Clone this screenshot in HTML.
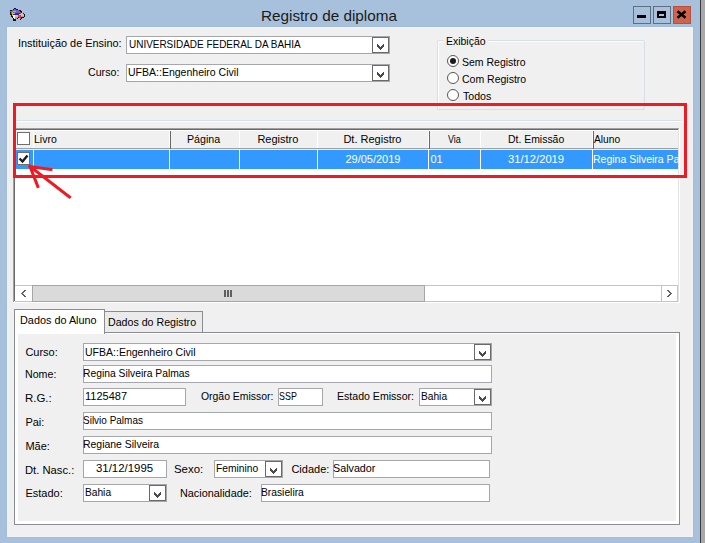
<!DOCTYPE html>
<html><head><meta charset="utf-8"><style>
html,body{margin:0;padding:0;}
body{width:705px;height:543px;position:relative;overflow:hidden;background:#a7c1dc;font-family:"Liberation Sans", sans-serif;}
.t{position:absolute;white-space:pre;line-height:20px;transform-origin:0 0;font-family:"Liberation Sans", sans-serif;}
.box{position:absolute;border:1px solid #a5a7ad;background:#fff;}
.btn{position:absolute;border:1px solid #696969;background:#fff;}
.chev{position:absolute;}
</style></head><body>
<div style="position:absolute;left:7px;top:27px;width:686px;height:510px;background:#f0f0f0;"></div>
<div style="position:absolute;left:6px;top:26px;width:688px;height:1px;background:#a2bddb;"></div>
<div style="position:absolute;left:6px;top:537px;width:688px;height:1px;background:#a2bddb;"></div>
<div style="position:absolute;left:6px;top:26px;width:1px;height:512px;background:#a2bddb;"></div>
<div style="position:absolute;left:693px;top:26px;width:1px;height:512px;background:#a2bddb;"></div>
<div style="position:absolute;left:7px;top:27px;width:686px;height:1px;background:#f4f3f1;"></div>
<div style="position:absolute;left:7px;top:536px;width:686px;height:1px;background:#f4f3f1;"></div>
<div style="position:absolute;left:7px;top:27px;width:1px;height:510px;background:#f4f3f1;"></div>
<div style="position:absolute;left:692px;top:27px;width:1px;height:510px;background:#f4f3f1;"></div>
<div style="position:absolute;left:700px;top:0px;width:1px;height:543px;background:#3c3c3c;"></div>
<div style="position:absolute;left:701px;top:0px;width:4px;height:543px;background:#a9a9a9;"></div>
<div style="position:absolute;left:633px;top:6px;width:16px;height:16px;border:1px solid #5f6f80;background:#a7c1dc"></div>
<div style="position:absolute;left:637px;top:15px;width:9px;height:3px;background:#000;"></div>
<div style="position:absolute;left:653px;top:6px;width:16px;height:16px;border:1px solid #5f6f80;background:#a7c1dc"></div>
<div style="position:absolute;left:657px;top:11px;width:5px;height:2px;border:2px solid #000;border-top-width:3px;background:#a7c1dc"></div>
<div style="position:absolute;left:673px;top:6px;width:16px;height:16px;border:1px solid #b8503c;background:#d0634b"></div>
<svg style="position:absolute;left:676px;top:10px" width="12" height="10" viewBox="0 0 12 10"><path d="M1.5 1.2 L9.5 7.8 M9.5 1.2 L1.5 7.8" stroke="#000" stroke-width="2.4"/></svg>
<svg style="position:absolute;left:7px;top:8px" width="20" height="13" viewBox="0 0 20 13" shape-rendering="crispEdges"><rect x="7" y="0" width="1" height="1" fill="#141414"/><rect x="8" y="0" width="1" height="1" fill="#141414"/><rect x="6" y="1" width="1" height="1" fill="#141414"/><rect x="7" y="1" width="1" height="1" fill="#6a66c2"/><rect x="8" y="1" width="1" height="1" fill="#6a66c2"/><rect x="9" y="1" width="1" height="1" fill="#141414"/><rect x="10" y="1" width="1" height="1" fill="#141414"/><rect x="3" y="2" width="1" height="1" fill="#141414"/><rect x="4" y="2" width="1" height="1" fill="#141414"/><rect x="5" y="2" width="1" height="1" fill="#6a66c2"/><rect x="6" y="2" width="1" height="1" fill="#6a66c2"/><rect x="7" y="2" width="1" height="1" fill="#6a66c2"/><rect x="8" y="2" width="1" height="1" fill="#6a66c2"/><rect x="9" y="2" width="1" height="1" fill="#6a66c2"/><rect x="10" y="2" width="1" height="1" fill="#6a66c2"/><rect x="11" y="2" width="1" height="1" fill="#6a66c2"/><rect x="12" y="2" width="1" height="1" fill="#141414"/><rect x="13" y="2" width="1" height="1" fill="#141414"/><rect x="2" y="3" width="1" height="1" fill="#a89c9c"/><rect x="3" y="3" width="1" height="1" fill="#6a66c2"/><rect x="4" y="3" width="1" height="1" fill="#6a66c2"/><rect x="5" y="3" width="1" height="1" fill="#6a66c2"/><rect x="6" y="3" width="1" height="1" fill="#c4bc3a"/><rect x="7" y="3" width="1" height="1" fill="#c4bc3a"/><rect x="8" y="3" width="1" height="1" fill="#c4bc3a"/><rect x="9" y="3" width="1" height="1" fill="#6a66c2"/><rect x="10" y="3" width="1" height="1" fill="#6a66c2"/><rect x="11" y="3" width="1" height="1" fill="#6a66c2"/><rect x="12" y="3" width="1" height="1" fill="#6a66c2"/><rect x="13" y="3" width="1" height="1" fill="#141414"/><rect x="14" y="3" width="1" height="1" fill="#141414"/><rect x="3" y="4" width="1" height="1" fill="#141414"/><rect x="4" y="4" width="1" height="1" fill="#6a66c2"/><rect x="5" y="4" width="1" height="1" fill="#c4bc3a"/><rect x="6" y="4" width="1" height="1" fill="#6a66c2"/><rect x="7" y="4" width="1" height="1" fill="#6a66c2"/><rect x="8" y="4" width="1" height="1" fill="#6a66c2"/><rect x="9" y="4" width="1" height="1" fill="#6a66c2"/><rect x="10" y="4" width="1" height="1" fill="#6a66c2"/><rect x="11" y="4" width="1" height="1" fill="#6a66c2"/><rect x="12" y="4" width="1" height="1" fill="#6a66c2"/><rect x="13" y="4" width="1" height="1" fill="#d44444"/><rect x="14" y="4" width="1" height="1" fill="#141414"/><rect x="3" y="5" width="1" height="1" fill="#141414"/><rect x="4" y="5" width="1" height="1" fill="#6a66c2"/><rect x="5" y="5" width="1" height="1" fill="#c4bc3a"/><rect x="6" y="5" width="1" height="1" fill="#aabcf0"/><rect x="7" y="5" width="1" height="1" fill="#aabcf0"/><rect x="8" y="5" width="1" height="1" fill="#30307c"/><rect x="9" y="5" width="1" height="1" fill="#30307c"/><rect x="10" y="5" width="1" height="1" fill="#30307c"/><rect x="11" y="5" width="1" height="1" fill="#30307c"/><rect x="12" y="5" width="1" height="1" fill="#30307c"/><rect x="13" y="5" width="1" height="1" fill="#d44444"/><rect x="14" y="5" width="1" height="1" fill="#d8bcbc"/><rect x="15" y="5" width="1" height="1" fill="#d8bcbc"/><rect x="16" y="5" width="1" height="1" fill="#141414"/><rect x="3" y="6" width="1" height="1" fill="#141414"/><rect x="4" y="6" width="1" height="1" fill="#141414"/><rect x="5" y="6" width="1" height="1" fill="#c4bc3a"/><rect x="6" y="6" width="1" height="1" fill="#30307c"/><rect x="7" y="6" width="1" height="1" fill="#30307c"/><rect x="8" y="6" width="1" height="1" fill="#30307c"/><rect x="9" y="6" width="1" height="1" fill="#30307c"/><rect x="10" y="6" width="1" height="1" fill="#30307c"/><rect x="11" y="6" width="1" height="1" fill="#30307c"/><rect x="12" y="6" width="1" height="1" fill="#d8bcbc"/><rect x="13" y="6" width="1" height="1" fill="#d8bcbc"/><rect x="14" y="6" width="1" height="1" fill="#d8bcbc"/><rect x="15" y="6" width="1" height="1" fill="#d8bcbc"/><rect x="16" y="6" width="1" height="1" fill="#d8bcbc"/><rect x="17" y="6" width="1" height="1" fill="#141414"/><rect x="4" y="7" width="1" height="1" fill="#141414"/><rect x="5" y="7" width="1" height="1" fill="#c4bc3a"/><rect x="6" y="7" width="1" height="1" fill="#f2eeee"/><rect x="7" y="7" width="1" height="1" fill="#f2eeee"/><rect x="8" y="7" width="1" height="1" fill="#d8bcbc"/><rect x="9" y="7" width="1" height="1" fill="#d8bcbc"/><rect x="10" y="7" width="1" height="1" fill="#d8bcbc"/><rect x="11" y="7" width="1" height="1" fill="#d44444"/><rect x="12" y="7" width="1" height="1" fill="#d44444"/><rect x="13" y="7" width="1" height="1" fill="#d44444"/><rect x="14" y="7" width="1" height="1" fill="#d8bcbc"/><rect x="15" y="7" width="1" height="1" fill="#d8bcbc"/><rect x="16" y="7" width="1" height="1" fill="#d8bcbc"/><rect x="17" y="7" width="1" height="1" fill="#141414"/><rect x="4" y="8" width="1" height="1" fill="#141414"/><rect x="5" y="8" width="1" height="1" fill="#141414"/><rect x="6" y="8" width="1" height="1" fill="#f2eeee"/><rect x="7" y="8" width="1" height="1" fill="#f2eeee"/><rect x="8" y="8" width="1" height="1" fill="#d8bcbc"/><rect x="9" y="8" width="1" height="1" fill="#d8bcbc"/><rect x="10" y="8" width="1" height="1" fill="#d8bcbc"/><rect x="11" y="8" width="1" height="1" fill="#d44444"/><rect x="12" y="8" width="1" height="1" fill="#d44444"/><rect x="13" y="8" width="1" height="1" fill="#d44444"/><rect x="14" y="8" width="1" height="1" fill="#a89c9c"/><rect x="15" y="8" width="1" height="1" fill="#a89c9c"/><rect x="16" y="8" width="1" height="1" fill="#a89c9c"/><rect x="17" y="8" width="1" height="1" fill="#141414"/><rect x="5" y="9" width="1" height="1" fill="#141414"/><rect x="6" y="9" width="1" height="1" fill="#f2eeee"/><rect x="7" y="9" width="1" height="1" fill="#f2eeee"/><rect x="8" y="9" width="1" height="1" fill="#a89c9c"/><rect x="9" y="9" width="1" height="1" fill="#a89c9c"/><rect x="10" y="9" width="1" height="1" fill="#a89c9c"/><rect x="11" y="9" width="1" height="1" fill="#141414"/><rect x="12" y="9" width="1" height="1" fill="#d44444"/><rect x="13" y="9" width="1" height="1" fill="#d44444"/><rect x="14" y="9" width="1" height="1" fill="#141414"/><rect x="15" y="9" width="1" height="1" fill="#141414"/><rect x="16" y="9" width="1" height="1" fill="#141414"/><rect x="6" y="10" width="1" height="1" fill="#141414"/><rect x="7" y="10" width="1" height="1" fill="#f2eeee"/><rect x="8" y="10" width="1" height="1" fill="#a89c9c"/><rect x="9" y="10" width="1" height="1" fill="#a89c9c"/><rect x="10" y="10" width="1" height="1" fill="#141414"/><rect x="13" y="10" width="1" height="1" fill="#d44444"/><rect x="14" y="10" width="1" height="1" fill="#141414"/><rect x="6" y="11" width="1" height="1" fill="#141414"/><rect x="7" y="11" width="1" height="1" fill="#141414"/><rect x="8" y="11" width="1" height="1" fill="#141414"/><rect x="13" y="11" width="1" height="1" fill="#141414"/><rect x="6" y="12" width="1" height="1" fill="#141414"/><rect x="7" y="12" width="1" height="1" fill="#141414"/><rect x="8" y="12" width="1" height="1" fill="#141414"/></svg>
<div class="box" style="left:126px;top:36px;width:262px;height:16px"></div><div class="btn" style="left:372px;top:37px;width:15px;height:14px"></div><svg class="chev" style="left:377px;top:44px" width="7" height="6" viewBox="0 0 7 6" shape-rendering="crispEdges"><path d="M0 0h1v3h-1z M1 1h1v3h-1z M2 2h1v3h-1z M3 3h1v3h-1z M4 2h1v3h-1z M5 1h1v3h-1z M6 0h1v3h-1z" fill="#4a4a4a"/></svg>
<div class="box" style="left:126px;top:64px;width:262px;height:16px"></div><div class="btn" style="left:372px;top:65px;width:15px;height:14px"></div><svg class="chev" style="left:377px;top:72px" width="7" height="6" viewBox="0 0 7 6" shape-rendering="crispEdges"><path d="M0 0h1v3h-1z M1 1h1v3h-1z M2 2h1v3h-1z M3 3h1v3h-1z M4 2h1v3h-1z M5 1h1v3h-1z M6 0h1v3h-1z" fill="#4a4a4a"/></svg>
<div style="position:absolute;left:437px;top:40px;width:206px;height:68px;border:1px solid #d5dfe5;border-radius:2px;box-shadow:inset 1px 1px 0 #fff"></div>
<div style="position:absolute;left:444px;top:36px;width:44px;height:9px;background:#f0f0f0;"></div>
<div style="position:absolute;left:447px;top:55px;width:10px;height:10px;border-radius:50%;border:1px solid #555;background:#fff"></div>
<div style="position:absolute;left:447px;top:72px;width:10px;height:10px;border-radius:50%;border:1px solid #555;background:#fff"></div>
<div style="position:absolute;left:447px;top:89px;width:10px;height:10px;border-radius:50%;border:1px solid #555;background:#fff"></div>
<div style="position:absolute;left:450px;top:58px;width:6px;height:6px;border-radius:50%;background:#1c1c1c"></div>
<div style="position:absolute;left:16px;top:120px;width:665px;height:1px;background:#d5dfe8;"></div>
<div style="position:absolute;left:16px;top:121px;width:665px;height:1px;background:#ffffff;"></div>
<div style="position:absolute;left:13px;top:128px;width:667px;height:175px;background:#ffffff;"></div>
<div style="position:absolute;left:13px;top:128px;width:666px;height:1px;background:#a0a0a0;"></div>
<div style="position:absolute;left:13px;top:128px;width:1px;height:174px;background:#a0a0a0;"></div>
<div style="position:absolute;left:14px;top:129px;width:664px;height:1px;background:#696969;"></div>
<div style="position:absolute;left:14px;top:129px;width:1px;height:172px;background:#696969;"></div>
<div style="position:absolute;left:678px;top:129px;width:1px;height:173px;background:#e3e3e3;"></div>
<div style="position:absolute;left:14px;top:301px;width:665px;height:1px;background:#e3e3e3;"></div>
<div style="position:absolute;left:15px;top:130px;width:663px;height:18px;background:#f0f0f0;"></div>
<div style="position:absolute;left:15px;top:130px;width:663px;height:1px;background:#ffffff;"></div>
<div style="position:absolute;left:16px;top:130px;width:1px;height:18px;background:#ffffff;"></div>
<div style="position:absolute;left:15px;top:148px;width:663px;height:1px;background:#a0a0a0;"></div>
<div style="position:absolute;left:15px;top:149px;width:663px;height:1px;background:#f2ece6;"></div>
<div style="position:absolute;left:33px;top:131px;width:1px;height:17px;background:#ffffff;"></div>
<div style="position:absolute;left:169px;top:131px;width:1px;height:17px;background:#ffffff;"></div>
<div style="position:absolute;left:239px;top:131px;width:1px;height:17px;background:#ffffff;"></div>
<div style="position:absolute;left:317px;top:131px;width:1px;height:17px;background:#ffffff;"></div>
<div style="position:absolute;left:428px;top:131px;width:1px;height:17px;background:#ffffff;"></div>
<div style="position:absolute;left:480px;top:131px;width:1px;height:17px;background:#ffffff;"></div>
<div style="position:absolute;left:592px;top:131px;width:1px;height:17px;background:#ffffff;"></div>
<div style="position:absolute;left:170px;top:131px;width:1px;height:18px;background:#696969;"></div>
<div style="position:absolute;left:429px;top:131px;width:1px;height:18px;background:#696969;"></div>
<div style="position:absolute;left:593px;top:131px;width:1px;height:18px;background:#696969;"></div>
<div style="position:absolute;left:16px;top:150px;width:662px;height:19px;background:#3399ff;"></div>
<div style="position:absolute;left:33px;top:149px;width:1px;height:20px;background:#ffffff;"></div>
<div style="position:absolute;left:169px;top:149px;width:1px;height:20px;background:#ffffff;"></div>
<div style="position:absolute;left:239px;top:149px;width:1px;height:20px;background:#ffffff;"></div>
<div style="position:absolute;left:317px;top:149px;width:1px;height:20px;background:#ffffff;"></div>
<div style="position:absolute;left:428px;top:149px;width:1px;height:20px;background:#ffffff;"></div>
<div style="position:absolute;left:480px;top:149px;width:1px;height:20px;background:#ffffff;"></div>
<div style="position:absolute;left:592px;top:149px;width:1px;height:20px;background:#ffffff;"></div>
<div style="position:absolute;left:17px;top:132px;width:11px;height:11px;border:1px solid #6e6e6e;background:#fff"></div>
<div style="position:absolute;left:17px;top:152px;width:11px;height:11px;border:1px solid #7a6e62;background:#fff"></div>
<svg style="position:absolute;left:17px;top:152px" width="13" height="13" viewBox="0 0 13 13"><path d="M2.5 6.5 L5.5 9.5 L10.5 3.5" fill="none" stroke="#1e1e1e" stroke-width="2.4"/></svg>
<div style="position:absolute;left:593px;top:150px;width:85px;height:19px;overflow:hidden"><div class="t" id="aluno" style="left:0px;top:-1px;font-size:11px;color:#fff;transform:scaleX(0.955)">Regina Silveira Palmas</div></div>
<div style="position:absolute;left:15px;top:285px;width:663px;height:1px;background:#c4c4c4;"></div>
<div style="position:absolute;left:15px;top:286px;width:663px;height:15px;background:#ffffff;"></div>
<div style="position:absolute;left:15px;top:301px;width:663px;height:1px;background:#c4c4c4;"></div>
<div style="position:absolute;left:661px;top:285px;width:1px;height:17px;background:#c4c4c4;"></div>
<div style="position:absolute;left:677px;top:285px;width:1px;height:17px;background:#c4c4c4;"></div>
<div style="position:absolute;left:32px;top:285px;width:391px;height:15px;border:1px solid #a6a6a6;background:#dadada"></div>
<div style="position:absolute;left:224px;top:290px;width:2px;height:7px;background:#606060;"></div>
<div style="position:absolute;left:227px;top:290px;width:2px;height:7px;background:#606060;"></div>
<div style="position:absolute;left:230px;top:290px;width:2px;height:7px;background:#606060;"></div>
<svg style="position:absolute;left:21px;top:290px" width="5" height="7" viewBox="0 0 5 7" shape-rendering="crispEdges"><path d="M3 0h2v1h-2z M2 1h2v1h-2z M1 2h2v1h-2z M0 3h2v1h-2z M1 4h2v1h-2z M2 5h2v1h-2z M3 6h2v1h-2z" fill="#606060"/></svg>
<svg style="position:absolute;left:667px;top:290px" width="5" height="7" viewBox="0 0 5 7" shape-rendering="crispEdges"><path d="M0 0h2v1h-2z M1 1h2v1h-2z M2 2h2v1h-2z M3 3h2v1h-2z M2 4h2v1h-2z M1 5h2v1h-2z M0 6h2v1h-2z" fill="#606060"/></svg>
<div style="position:absolute;left:14px;top:332px;width:664px;height:191px;border:1px solid #898c95;background:#fff"></div>
<div style="position:absolute;left:18px;top:334px;width:658px;height:187px;background:#f0f0f0;"></div>
<div style="position:absolute;left:104px;top:311px;width:97px;height:20px;border:1px solid #898c95;border-bottom:none;background:#ebebeb"></div>
<div style="position:absolute;left:14px;top:309px;width:89px;height:24px;border:1px solid #898c95;border-bottom:none;background:#fff"></div>
<div class="box" style="left:83px;top:343px;width:407px;height:16px"></div><div class="btn" style="left:474px;top:344px;width:15px;height:14px"></div><svg class="chev" style="left:479px;top:351px" width="7" height="6" viewBox="0 0 7 6" shape-rendering="crispEdges"><path d="M0 0h1v3h-1z M1 1h1v3h-1z M2 2h1v3h-1z M3 3h1v3h-1z M4 2h1v3h-1z M5 1h1v3h-1z M6 0h1v3h-1z" fill="#4a4a4a"/></svg>
<div class="box" style="left:83px;top:365px;width:407px;height:16px"></div>
<div class="box" style="left:83px;top:388px;width:101px;height:16px"></div>
<div class="box" style="left:278px;top:388px;width:43px;height:16px"></div>
<div class="box" style="left:419px;top:388px;width:71px;height:16px"></div><div class="btn" style="left:474px;top:389px;width:15px;height:14px"></div><svg class="chev" style="left:479px;top:396px" width="7" height="6" viewBox="0 0 7 6" shape-rendering="crispEdges"><path d="M0 0h1v3h-1z M1 1h1v3h-1z M2 2h1v3h-1z M3 3h1v3h-1z M4 2h1v3h-1z M5 1h1v3h-1z M6 0h1v3h-1z" fill="#4a4a4a"/></svg>
<div class="box" style="left:83px;top:412px;width:407px;height:16px"></div>
<div class="box" style="left:83px;top:436px;width:407px;height:16px"></div>
<div class="box" style="left:83px;top:460px;width:82px;height:16px"></div>
<div class="box" style="left:214px;top:460px;width:67px;height:16px"></div><div class="btn" style="left:265px;top:461px;width:15px;height:14px"></div><svg class="chev" style="left:270px;top:468px" width="7" height="6" viewBox="0 0 7 6" shape-rendering="crispEdges"><path d="M0 0h1v3h-1z M1 1h1v3h-1z M2 2h1v3h-1z M3 3h1v3h-1z M4 2h1v3h-1z M5 1h1v3h-1z M6 0h1v3h-1z" fill="#4a4a4a"/></svg>
<div class="box" style="left:333px;top:460px;width:155px;height:16px"></div>
<div class="box" style="left:83px;top:484px;width:82px;height:16px"></div><div class="btn" style="left:149px;top:485px;width:15px;height:14px"></div><svg class="chev" style="left:154px;top:492px" width="7" height="6" viewBox="0 0 7 6" shape-rendering="crispEdges"><path d="M0 0h1v3h-1z M1 1h1v3h-1z M2 2h1v3h-1z M3 3h1v3h-1z M4 2h1v3h-1z M5 1h1v3h-1z M6 0h1v3h-1z" fill="#4a4a4a"/></svg>
<div class="box" style="left:261px;top:484px;width:227px;height:16px"></div>
<div style="position:absolute;left:13px;top:103px;width:668px;height:69px;border:3px solid #ed1c24"></div>
<svg style="position:absolute;left:0;top:0" width="705" height="543" viewBox="0 0 705 543"><path d="M30 166.5 L69.5 197 M30 166.5 L51 169.5 M30 166.5 L37.8 186.5" fill="none" stroke="#ed1c24" stroke-width="3" stroke-linecap="square"/></svg>
<div class="t" style="left:261.35px;top:6px;font-size:14.5px;color:#1a1a1a;transform:scaleX(1.0547);">Registro de diploma</div>
<div class="t" style="left:18.41px;top:33px;font-size:11px;color:#000;transform:scaleX(0.9903);">Instituição de Ensino:</div>
<div class="t" style="left:128.50px;top:34px;font-size:11px;color:#000;transform:scaleX(0.9048);">UNIVERSIDADE FEDERAL DA BAHIA</div>
<div class="t" style="left:88.43px;top:62px;font-size:11px;color:#000;transform:scaleX(0.9677);">Curso:</div>
<div class="t" style="left:128.44px;top:62px;font-size:11px;color:#000;transform:scaleX(0.9561);">UFBA::Engenheiro Civil</div>
<div class="t" style="left:446.45px;top:31px;font-size:11px;color:#000;transform:scaleX(0.9500);">Exibição</div>
<div class="t" style="left:462.45px;top:52px;font-size:11px;color:#000;transform:scaleX(0.9538);">Sem Registro</div>
<div class="t" style="left:462.45px;top:69px;font-size:11px;color:#000;transform:scaleX(0.9545);">Com Registro</div>
<div class="t" style="left:463.40px;top:86px;font-size:11px;color:#000;transform:scaleX(0.9655);">Todos</div>
<div class="t" style="left:34.44px;top:129px;font-size:11px;color:#000;transform:scaleX(0.9565);">Livro</div>
<div class="t" style="left:187.43px;top:129px;font-size:11px;color:#000;transform:scaleX(0.9697);">Página</div>
<div class="t" style="left:257.40px;top:129px;font-size:11px;color:#000;transform:scaleX(1.0000);">Registro</div>
<div class="t" style="left:343.40px;top:129px;font-size:11px;color:#000;transform:scaleX(1.0000);">Dt. Registro</div>
<div class="t" style="left:448.40px;top:129px;font-size:11px;color:#000;transform:scaleX(0.8125);">Via</div>
<div class="t" style="left:508.45px;top:129px;font-size:11px;color:#000;transform:scaleX(0.9483);">Dt. Emissão</div>
<div class="t" style="left:594.40px;top:129px;font-size:11px;color:#000;transform:scaleX(0.9286);">Aluno</div>
<div class="t" style="left:345.40px;top:149px;font-size:11px;color:#fff;transform:scaleX(1.0000);">29/05/2019</div>
<div class="t" style="left:430.40px;top:149px;font-size:11px;color:#fff;transform:scaleX(1.0000);">01</div>
<div class="t" style="left:508.38px;top:149px;font-size:11px;color:#fff;transform:scaleX(1.0185);">31/12/2019</div>
<div class="t" style="left:20.41px;top:310px;font-size:11px;color:#000;transform:scaleX(0.9868);">Dados do Aluno</div>
<div class="t" style="left:108.43px;top:312px;font-size:11px;color:#000;transform:scaleX(0.9667);">Dados do Registro</div>
<div class="t" style="left:25.40px;top:342px;font-size:11px;color:#000;transform:scaleX(1.0000);">Curso:</div>
<div class="t" style="left:85.44px;top:342px;font-size:11px;color:#000;transform:scaleX(0.9561);">UFBA::Engenheiro Civil</div>
<div class="t" style="left:25.43px;top:364px;font-size:11px;color:#000;transform:scaleX(0.9677);">Nome:</div>
<div class="t" style="left:83.46px;top:363px;font-size:11px;color:#000;transform:scaleX(0.9381);">Regina Silveira Palmas</div>
<div class="t" style="left:25.36px;top:388px;font-size:11px;color:#000;transform:scaleX(1.0417);">R.G.:</div>
<div class="t" style="left:85.00px;top:386px;font-size:11px;color:#000;transform:scaleX(1.0000);">1125487</div>
<div class="t" style="left:201.40px;top:386px;font-size:11px;color:#000;transform:scaleX(0.9474);">Orgão Emissor:</div>
<div class="t" style="left:278.59px;top:386px;font-size:11px;color:#000;transform:scaleX(0.8095);">SSP</div>
<div class="t" style="left:337.44px;top:386px;font-size:11px;color:#000;transform:scaleX(0.9615);">Estado Emissor:</div>
<div class="t" style="left:421.47px;top:386px;font-size:11px;color:#000;transform:scaleX(0.9259);">Bahia</div>
<div class="t" style="left:25.40px;top:412px;font-size:11px;color:#000;transform:scaleX(1.0000);">Pai:</div>
<div class="t" style="left:83.49px;top:410px;font-size:11px;color:#000;transform:scaleX(0.9077);">Silvio Palmas</div>
<div class="t" style="left:25.40px;top:436px;font-size:11px;color:#000;transform:scaleX(1.0000);">Mãe:</div>
<div class="t" style="left:83.45px;top:434px;font-size:11px;color:#000;transform:scaleX(0.9494);">Regiane Silveira</div>
<div class="t" style="left:25.38px;top:460px;font-size:11px;color:#000;transform:scaleX(1.0213);">Dt. Nasc.:</div>
<div class="t" style="left:96.36px;top:458px;font-size:11px;color:#000;transform:scaleX(1.0370);">31/12/1995</div>
<div class="t" style="left:174.36px;top:459px;font-size:11px;color:#000;transform:scaleX(1.0385);">Sexo:</div>
<div class="t" style="left:216.47px;top:458px;font-size:11px;color:#000;transform:scaleX(0.9318);">Feminino</div>
<div class="t" style="left:291.40px;top:459px;font-size:11px;color:#000;transform:scaleX(1.0000);">Cidade:</div>
<div class="t" style="left:333.42px;top:458px;font-size:11px;color:#000;transform:scaleX(0.9762);">Salvador</div>
<div class="t" style="left:25.40px;top:483px;font-size:11px;color:#000;transform:scaleX(1.0000);">Estado:</div>
<div class="t" style="left:85.27px;top:482px;font-size:11px;color:#000;transform:scaleX(0.9259);">Bahia</div>
<div class="t" style="left:180.41px;top:483px;font-size:11px;color:#000;transform:scaleX(0.9859);">Nacionalidade:</div>
<div class="t" style="left:261.47px;top:482px;font-size:11px;color:#000;transform:scaleX(0.9333);">Brasielira</div>
</body></html>
